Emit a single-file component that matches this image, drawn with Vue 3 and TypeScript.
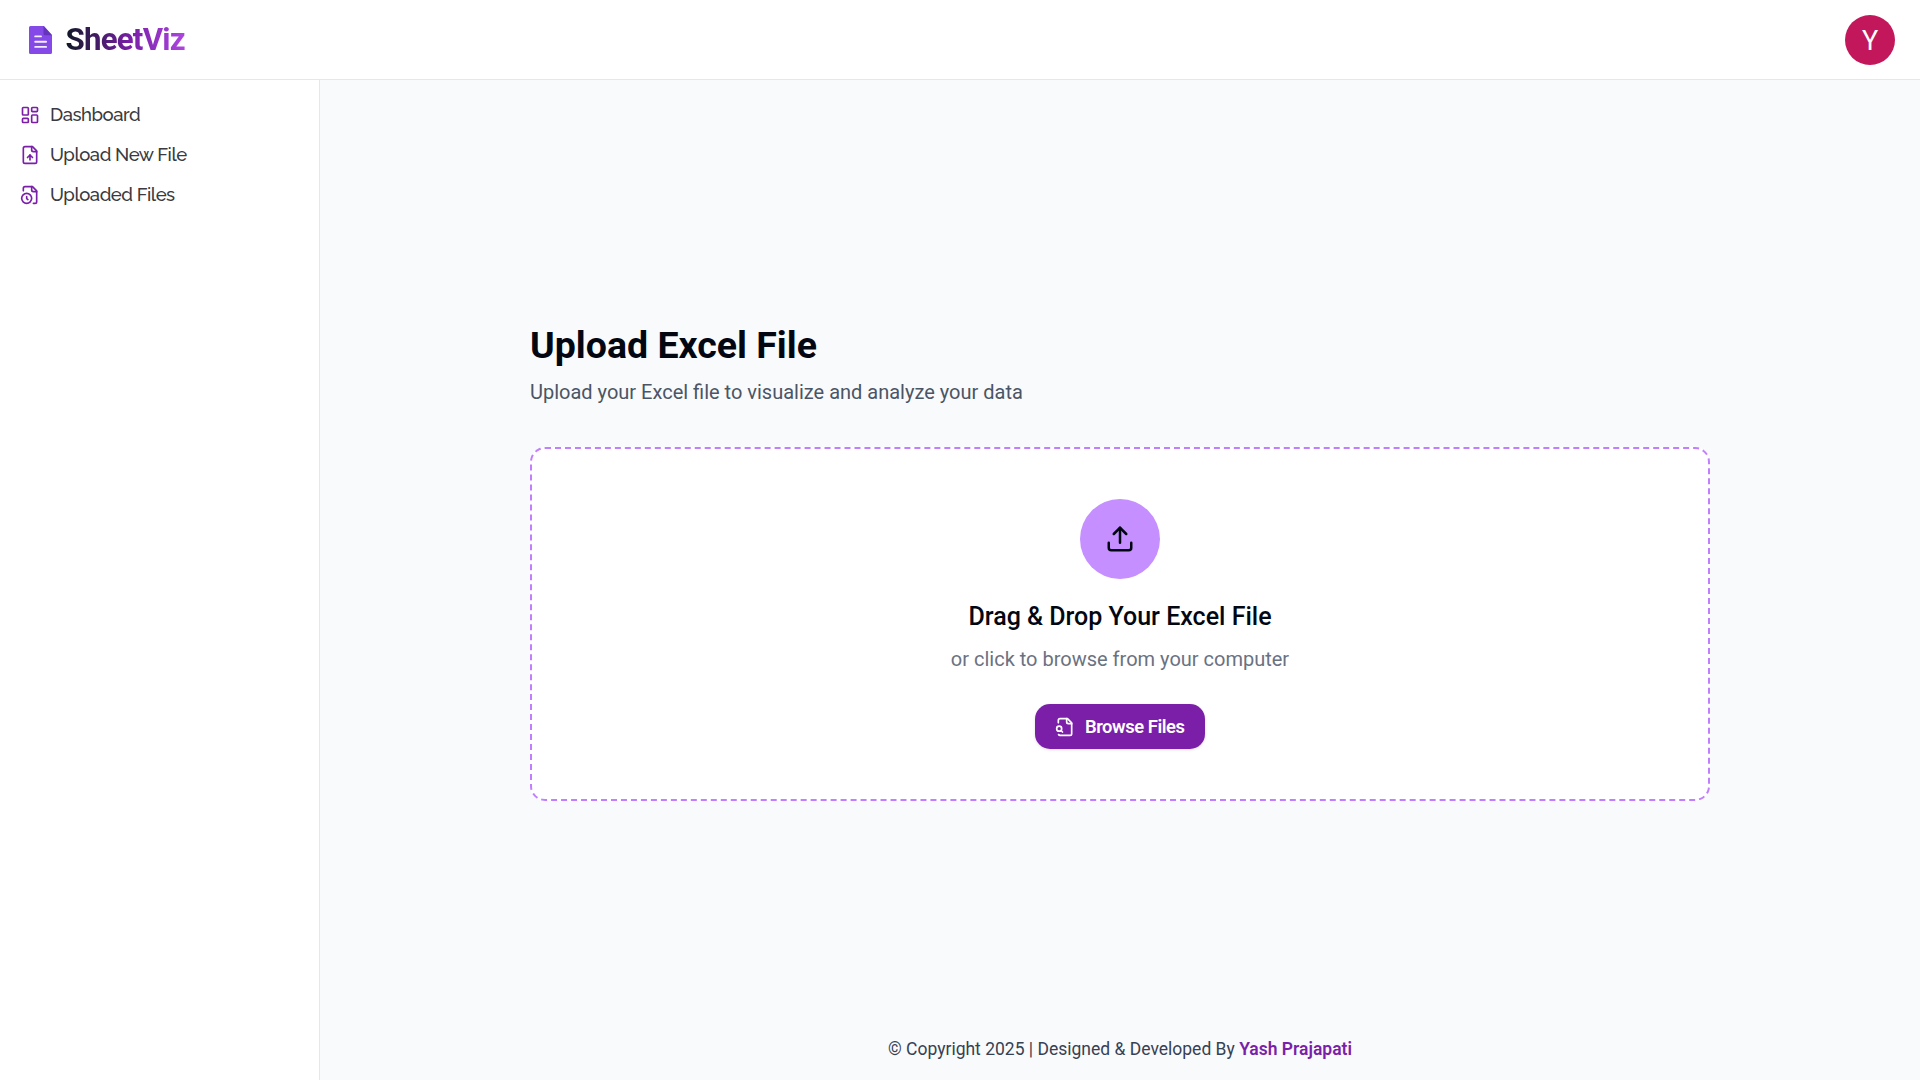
<script setup lang="ts">
interface NavItem {
  label: string
  paths: string[]
}

const navItems: NavItem[] = [
  {
    label: 'Dashboard',
    paths: ['M4 3h5a1 1 0 0 1 1 1v7a1 1 0 0 1-1 1H4a1 1 0 0 1-1-1V4a1 1 0 0 1 1-1z', 'M15 3h5a1 1 0 0 1 1 1v3a1 1 0 0 1-1 1h-5a1 1 0 0 1-1-1V4a1 1 0 0 1 1-1z', 'M15 12h5a1 1 0 0 1 1 1v7a1 1 0 0 1-1 1h-5a1 1 0 0 1-1-1v-7a1 1 0 0 1 1-1z', 'M4 16h5a1 1 0 0 1 1 1v3a1 1 0 0 1-1 1H4a1 1 0 0 1-1-1v-3a1 1 0 0 1 1-1z'],
  },
  {
    label: 'Upload New File',
    paths: ['M15 2H6a2 2 0 0 0-2 2v16a2 2 0 0 0 2 2h12a2 2 0 0 0 2-2V7Z', 'M14 2v4a2 2 0 0 0 2 2h4', 'M12 12v6', 'm15 15-3-3-3 3'],
  },
  {
    label: 'Uploaded Files',
    paths: ['M16 22h2a2 2 0 0 0 2-2V7l-5-5H6a2 2 0 0 0-2 2v3', 'M14 2v4a2 2 0 0 0 2 2h4', 'M8 10a6 6 0 1 0 0 12 6 6 0 1 0 0-12', 'M9.5 17.5 8 16.25V14'],
  },
]
</script>

<template>
  <div class="app">
    <header class="header">
      <div class="brand">
        <svg class="brand-icon" viewBox="0 0 23 28">
          <path d="M1.500 0H15l8 9v17.500a1.500 1.500 0 0 1-1.500 1.500h-20A1.500 1.500 0 0 1 0 26.500v-25A1.500 1.500 0 0 1 1.500 0z" fill="#8549e8" />
          <path d="M14.500 0 23 9.300h-7a1.500 1.500 0 0 1-1.500-1.500z" fill="#6534bd" />
          <path d="M6.200 10.400h5.800M6.200 15.700h10.900M6.200 20.900h10.900" stroke="#f4eefe" stroke-width="1.900" stroke-linecap="round" />
        </svg>
        <span class="brand-name">SheetViz</span>
      </div>
      <div class="avatar">Y</div>
    </header>
    <div class="body">
      <aside class="sidebar">
        <a v-for="item in navItems" :key="item.label" class="nav-item">
          <svg class="icon nav-icon" viewBox="0 0 24 24">
            <path v-for="d in item.paths" :key="d" :d="d" />
          </svg>
          <span class="nav-label">{{ item.label }}</span>
        </a>
      </aside>
      <main class="main">
        <section class="upload">
          <h1>Upload Excel File</h1>
          <p class="subtitle">Upload your Excel file to visualize and analyze your data</p>
          <div class="dropzone">
            <div class="circle">
              <svg class="icon upload-icon" viewBox="0 0 24 24">
                <path d="M12 3v12" />
                <path d="m17 8-5-5-5 5" />
                <path d="M21 15v4a2 2 0 0 1-2 2H5a2 2 0 0 1-2-2v-4" />
              </svg>
            </div>
            <h2>Drag &amp; Drop Your Excel File</h2>
            <p class="hint">or click to browse from your computer</p>
            <button class="browse">
              <svg class="icon browse-icon" viewBox="0 0 24 24">
                <path d="M14 2v4a2 2 0 0 0 2 2h4" />
                <path d="M4.268 21a2 2 0 0 0 1.727 1H18a2 2 0 0 0 2-2V7l-5-5H6a2 2 0 0 0-2 2v3" />
                <path d="m9 18-1.500-1.500" />
                <circle cx="5" cy="14" r="3" />
              </svg>
              <span>Browse Files</span>
            </button>
          </div>
        </section>
        <footer class="footer">© Copyright 2025 | Designed &amp; Developed By <b>Yash Prajapati</b></footer>
      </main>
    </div>
  </div>
</template>

<style>
body {
  margin: 0;
}
</style>

<style scoped>
.app {
  display: flex;
  flex-direction: column;
  height: 100vh;
  overflow: hidden;
  background: #f9fafc;
  color: #030712;
  font-family: Roboto, "Liberation Sans", sans-serif;
}
.header {
  display: flex;
  align-items: center;
  justify-content: space-between;
  box-sizing: border-box;
  height: 80px;
  padding: 0 25px 0 29px;
  background: #fff;
  border-bottom: 1px solid #e5e7eb;
}
.brand {
  display: flex;
  align-items: center;
  gap: 13.5px;
}
.brand-icon {
  width: 23px;
  height: 28px;
}
.brand-name {
  font-size: 31.25px;
  line-height: 36px;
  font-weight: 700;
  letter-spacing: -0.025em;
  color: transparent;
  background: linear-gradient(90deg, #101828, #7b1fa9 55%, #ad46e0);
  background-clip: text;
  -webkit-background-clip: text;
}
.avatar {
  width: 50px;
  height: 50px;
  border-radius: 50%;
  background: #c2185b;
  color: #fff;
  font-size: 27px;
  line-height: 52px;
  text-align: center;
}
.body {
  display: flex;
  flex: 1;
  min-height: 0;
}
.sidebar {
  display: flex;
  flex-direction: column;
  box-sizing: border-box;
  width: 320px;
  padding: 15px 20px;
  background: #fff;
  border-right: 1px solid #e5e7eb;
}
.nav-item {
  display: flex;
  align-items: center;
  gap: 10px;
  height: 40px;
  color: #3a3a40;
  font-family: Raleway, Lato, sans-serif;
  font-size: 18.5px;
  line-height: 25px;
  font-weight: 500;
  letter-spacing: -0.025em;
  white-space: nowrap;
}
.nav-label {
  padding-bottom: 2px;
}
.icon {
  flex: none;
  fill: none;
  stroke: currentColor;
  stroke-width: 2;
  stroke-linecap: round;
  stroke-linejoin: round;
}
.nav-icon {
  width: 20px;
  height: 20px;
  color: #7b1fa9;
}
.main {
  display: flex;
  flex: 1;
  flex-direction: column;
  align-items: center;
}
.upload {
  display: flex;
  flex: 1;
  flex-direction: column;
  width: 1180px;
  padding-top: 242px;
}
h1 {
  margin: 0;
  font-size: 37.5px;
  line-height: 46px;
  font-weight: 700;
}
.subtitle {
  margin: 10px 0 40px;
  color: #4a5565;
  font-size: 20px;
  line-height: 29px;
}
.dropzone {
  display: flex;
  flex-direction: column;
  align-items: center;
  box-sizing: border-box;
  height: 354px;
  padding: 50px;
  background: #fff;
  border: 2px dashed #c17fff;
  border-radius: 15px;
}
.circle {
  display: flex;
  align-items: center;
  justify-content: center;
  width: 80px;
  height: 80px;
  background: #c58fff;
  border-radius: 50%;
}
.upload-icon {
  width: 30px;
  height: 30px;
}
h2 {
  margin: 20px 0 10px;
  font-size: 25px;
  line-height: 35px;
  font-weight: 500;
}
.hint {
  margin: 0 0 30px;
  color: #6a7282;
  font-size: 20px;
  line-height: 30px;
}
.browse {
  display: flex;
  align-items: center;
  gap: 10px;
  width: 170px;
  height: 45px;
  padding: 0 20px;
  border: 0;
  border-radius: 15px;
  background: #7b1fa9;
  box-shadow: 0 1px 3px rgba(0, 0, 0, 0.12);
  color: #fff;
  font-family: inherit;
  font-size: 18.4px;
  font-weight: 600;
  letter-spacing: -0.025em;
  white-space: nowrap;
}
.browse-icon {
  width: 20px;
  height: 20px;
}
.footer {
  padding-bottom: 17px;
  color: #364153;
  font-size: 17.5px;
  line-height: 28px;
}
.footer b {
  color: #7b1fa9;
  font-weight: 600;
}
</style>
